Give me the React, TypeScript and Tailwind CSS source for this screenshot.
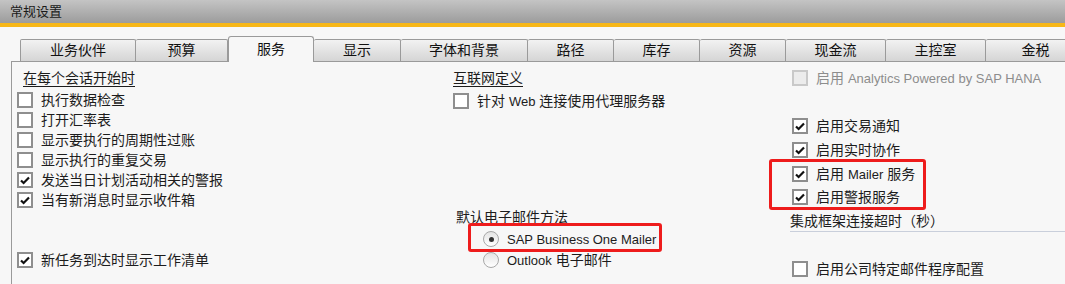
import React from 'react';

const font = { fontFamily: '"Liberation Sans", "Noto Sans CJK SC", sans-serif' };

const tabs = [
  { label: '业务伙伴', w: 'w-[116px]' },
  { label: '预算', w: 'w-[92px]' },
  { label: '服务', w: 'w-[86px]', active: true },
  { label: '显示', w: 'w-[87px]' },
  { label: '字体和背景', w: 'w-[127px]' },
  { label: '路径', w: 'w-[86px]' },
  { label: '库存', w: 'w-[86px]' },
  { label: '资源', w: 'w-[86px]' },
  { label: '现金流', w: 'w-[100px]' },
  { label: '主控室', w: 'w-[100px]' },
  { label: '金税', w: 'w-[100px]' },
];

function Check({ checked, disabled }: { checked?: boolean; disabled?: boolean }) {
  return (
    <span
      className={`flex h-4 w-4 shrink-0 items-center justify-center border-2 ${
        disabled ? 'border-[#c9c9c9] bg-[#ececec]' : 'border-[#8e8e8e] bg-white'
      }`}
    >
      {checked && (
        <svg width="10" height="9" viewBox="0 0 10 9">
          <path d="M1 4.5 L3.6 7 L9 1.5" fill="none" stroke="#111" strokeWidth="2.2" />
        </svg>
      )}
    </span>
  );
}

function Radio({ checked }: { checked?: boolean }) {
  return (
    <span className="flex h-4 w-4 shrink-0 items-center justify-center rounded-full border border-[#a8a8a8] bg-gradient-to-b from-[#e4e4e4] to-white">
      {checked && <span className="h-[5px] w-[5px] rounded-full bg-[#333]" />}
    </span>
  );
}

// latin words in the labels run a bit narrower than the CJK glyphs
function L({ children }: { children: React.ReactNode }) {
  return <span className="text-[13px]">{children}</span>;
}

function Row({ children, label, disabled }: { children: React.ReactNode; label: React.ReactNode; disabled?: boolean }) {
  return (
    <div className="flex h-5 items-center gap-2">
      {children}
      <span className={`whitespace-nowrap text-[14px] leading-5 ${disabled ? 'text-[#8d8d8d]' : 'text-[#1c1c1c]'}`}>
        {label}
      </span>
    </div>
  );
}

export default function App() {
  return (
    <div className="h-[284px] w-[1065px] overflow-hidden bg-[#f7f7f7]" style={font}>
      {/* title bar */}
      <div className="flex h-[23px] items-center bg-gradient-to-b from-[#c4c4c4] to-[#9c9c9c] pl-[10px]">
        <span className="text-[13px] leading-none text-[#1a1a1a]">常规设置</span>
      </div>
      <div className="h-[4px] bg-[#f7b718]" />

      <div className="ml-[11px] pt-[9px]">
        {/* tabs */}
        <div className="flex h-[25px] items-end pl-[9px]">
          {tabs.map(t =>
            t.active ? (
              <div
                key={t.label}
                className={`${t.w} relative z-10 -mb-px flex h-[26px] shrink-0 items-center justify-center rounded-t-[3px] border border-b-0 border-[#9a9a9a] bg-[#f7f7f7] pb-[1px] text-[14px] text-[#111]`}
              >
                {t.label}
              </div>
            ) : (
              <div
                key={t.label}
                className={`${t.w} flex h-[22px] shrink-0 items-center justify-center rounded-t-[2px] border border-b-0 border-l-0 border-[#9a9a9a] bg-gradient-to-b from-[#f2f2f2] to-[#d5d5d5] text-[14px] text-[#111] first:border-l`}
              >
                {t.label}
              </div>
            )
          )}
        </div>

        {/* panel */}
        <div className="flex h-[230px] border-l border-t border-[#9a9a9a] pt-[6px]">
          {/* left column */}
          <div className="flex w-[441px] shrink-0 flex-col pl-[5px]">
            <div className="flex h-5 items-center pl-[6px]">
              <span className="text-[14px] leading-5 text-[#1c1c1c] underline underline-offset-[3px]">在每个会话开始时</span>
            </div>
            <div className="mt-[2px] flex flex-col">
              <Row label="执行数据检查"><Check /></Row>
              <Row label="打开汇率表"><Check /></Row>
              <Row label="显示要执行的周期性过账"><Check /></Row>
              <Row label="显示执行的重复交易"><Check /></Row>
              <Row label="发送当日计划活动相关的警报"><Check checked /></Row>
              <Row label="当有新消息时显示收件箱"><Check checked /></Row>
            </div>
            <div className="mt-[40px]">
              <Row label="新任务到达时显示工作清单"><Check checked /></Row>
            </div>
          </div>

          {/* middle column */}
          <div className="flex w-[337px] shrink-0 flex-col">
            <div className="flex h-5 items-center">
              <span className="text-[14px] leading-5 text-[#1c1c1c] underline underline-offset-[3px]">互联网定义</span>
            </div>
            <div className="mt-[3px]">
              <Row label={<>针对 <L>Web</L> 连接使用代理服务器</>}><Check /></Row>
            </div>
            <div className="mt-[96px] flex h-5 items-center pl-[3px]">
              <span className="text-[14px] leading-5 text-[#1c1c1c]">默认电子邮件方法</span>
            </div>
            <div className="relative z-10 -mt-[4px] ml-[15px] w-[194px] rounded-[3px] border-[3px] border-[#ee1c1c] pl-[12px] pt-[3px]">
              <Row label={<L>SAP Business One Mailer</L>}><Radio checked /></Row>
            </div>
            <div className="-mt-[2px] pl-[30px]">
              <Row label={<><L>Outlook</L> 电子邮件</>}><Radio /></Row>
            </div>
          </div>

          {/* right column */}
          <div className="flex flex-1 flex-col">
            <div className="pl-[2px]">
              <Row label={<>启用 <L>Analytics Powered by SAP HANA</L></>} disabled><Check disabled /></Row>
            </div>
            <div className="mt-[28px] flex flex-col gap-1 pl-[2px]">
              <Row label="启用交易通知"><Check checked /></Row>
              <Row label="启用实时协作"><Check checked /></Row>
            </div>
            <div className="-ml-[21px] -mt-px flex w-[157px] flex-col gap-[3px] rounded-[3px] border-[3px] border-[#ee1c1c] pl-[20px] pt-[2px]">
              <Row label={<>启用 <L>Mailer</L> 服务</>}><Check checked /></Row>
              <Row label="启用警报服务"><Check checked /></Row>
            </div>
            <div className="mt-px flex h-[21px] items-center border-b border-[#c9cfdb]">
              <span className="text-[14px] leading-5 text-[#1c1c1c]">集成框架连接超时（秒）</span>
            </div>
            <div className="mt-[27px] pl-[2px]">
              <Row label="启用公司特定邮件程序配置"><Check /></Row>
            </div>
          </div>
        </div>
      </div>
    </div>
  );
}
